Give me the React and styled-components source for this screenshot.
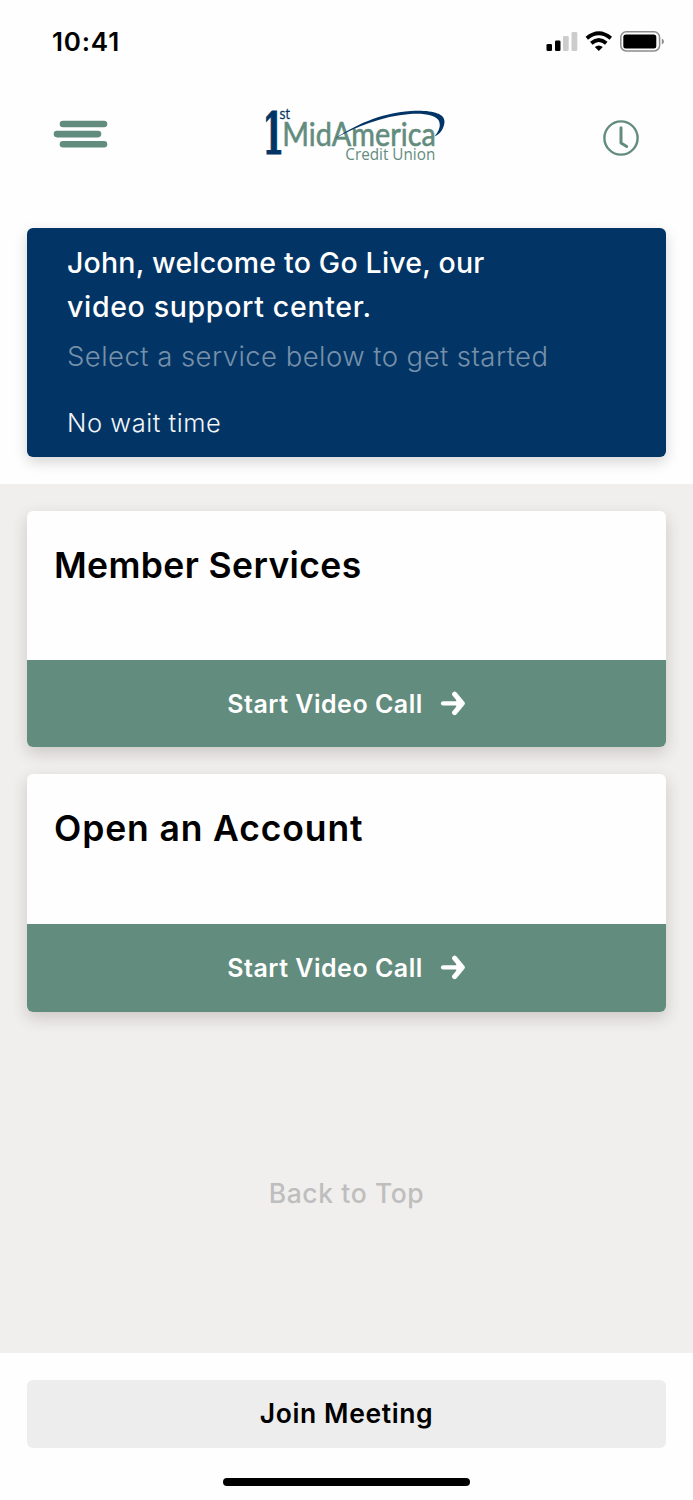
import React from "react";
import styled, { createGlobalStyle } from "styled-components";

const GlobalStyle = createGlobalStyle`
  * {
    box-sizing: border-box;
  }

  body {
    margin: 0;
    background-color: #fefefe;
    font-family: "Inter", sans-serif;
  }

  h1, h2, p {
    margin: 0;
    white-space: nowrap;
  }
`;

const Screen = styled.div`
  display: flex;
  flex-direction: column;
  width: 693px;
  height: 1500px;
  overflow: hidden;
  background-color: #fefefe;
`;

const StatusBar = styled.div`
  display: flex;
  justify-content: space-between;
  align-items: center;
  height: 84px;
  padding: 0 28px 0 52px;
`;

const StatusTime = styled.p`
  color: #000000;
  font-size: 26px;
  font-weight: 600;
  line-height: 32px;
  letter-spacing: 0.8px;
`;

const StatusIcons = styled.svg`
  display: block;
  width: 120px;
  height: 30px;
`;

const Header = styled.header`
  display: flex;
  justify-content: space-between;
  align-items: flex-start;
  height: 144px;
  padding: 11px 53px 0;
`;

const IconButton = styled.button`
  display: flex;
  width: ${(props) => props.$width}px;
  height: 80px;
  padding: ${(props) => props.$top}px 0 0;
  border: none;
  background: none;
  cursor: pointer;

  svg {
    display: block;
    flex: none;
  }
`;

const LogoImage = styled.svg`
  display: block;
  width: 200px;
  height: 75px;
  margin-right: 1px;
  overflow: visible;
`;

const Banner = styled.section`
  height: 229px;
  margin: 0 27px 27px;
  padding: 13px 40px 0;
  border-radius: 6px;
  background-color: #023565;
  box-shadow: 0 5px 14px rgba(0, 0, 0, 0.17);
`;

const BannerTitle = styled.h1`
  color: #ffffff;
  font-size: ${(props) => props.$size}px;
  font-weight: 500;
  line-height: 44px;
  letter-spacing: ${(props) => props.$spacing}px;
`;

const BannerHint = styled.p`
  margin-top: 5px;
  color: #7690aa;
  font-size: 27.5px;
  font-weight: 300;
  line-height: 44px;
  letter-spacing: 0.45px;
`;

const WaitTime = styled.p`
  margin-top: 25px;
  color: #f2f5f8;
  font-size: 25.5px;
  font-weight: 300;
  line-height: 40px;
  letter-spacing: 0.55px;
`;

const Services = styled.main`
  display: flex;
  flex-direction: column;
  gap: 27px;
  height: 869px;
  padding: 27px 27px 0;
  background-color: #f0efed;
`;

const Card = styled.section`
  display: flex;
  flex-direction: column;
  height: ${(props) => props.$height}px;
  flex: none;
  border-radius: 6px;
  background-color: #fefefe;
  box-shadow: 0 6px 16px rgba(60, 45, 45, 0.2);
  overflow: hidden;
`;

const CardTitle = styled.h2`
  flex: 1;
  padding: 32px 27px 0;
  color: #000000;
  font-size: 35.5px;
  font-weight: 600;
  line-height: 45px;
  letter-spacing: ${(props) => props.$spacing}px;
`;

const CallButton = styled.button`
  display: flex;
  align-items: center;
  justify-content: center;
  gap: 17px;
  height: ${(props) => props.$height}px;
  padding: 0;
  border: none;
  background-color: #628c7d;
  color: #ffffff;
  font-family: "Inter", sans-serif;
  font-size: 25px;
  font-weight: 600;
  letter-spacing: 0.5px;
  cursor: pointer;
`;

const BackToTop = styled.p`
  margin-top: 134px;
  color: #bfbebe;
  font-size: 26.5px;
  font-weight: 500;
  line-height: 40px;
  letter-spacing: 0.6px;
  text-align: center;
`;

const Footer = styled.footer`
  display: flex;
  flex-direction: column;
  align-items: center;
  padding: 27px 27px 0;
`;

const JoinButton = styled.button`
  width: 639px;
  height: 68px;
  padding: 0 0 2px;
  border: none;
  border-radius: 6px;
  background-color: #ededed;
  color: #000000;
  font-family: "Inter", sans-serif;
  font-size: 26.5px;
  font-weight: 600;
  letter-spacing: 0.6px;
  cursor: pointer;
`;

const HomeIndicator = styled.div`
  width: 247px;
  height: 8px;
  margin-top: 30px;
  border-radius: 4px;
  background-color: #000000;
`;

const services = [
  { name: "Member Services", height: 236, buttonHeight: 87, spacing: 0.38 },
  { name: "Open an Account", height: 238, buttonHeight: 88, spacing: 0.87 },
];

const PhoneStatus = () => (
  <StatusIcons viewBox="545 27 120 30">
    <rect x="546.5" y="44" width="5.5" height="7" rx="1.3" />
    <rect x="555" y="40.5" width="5.5" height="10.5" rx="1.3" />
    <rect x="563" y="36" width="5.7" height="15" rx="1.3" fill="#cccccc" />
    <rect x="571.5" y="32" width="5.8" height="19" rx="1.3" fill="#cccccc" />
    <g fill="none" stroke="#000000" strokeWidth="3.8">
      <path d="M586.8 38.2Q598.8 28.2 610.8 38.2" />
      <path d="M591.3 43.2Q598.8 36.9 606.3 43.2" />
    </g>
    <path d="M594.8 47.1Q598.8 44 602.8 47.1L598.8 51Z" />
    <rect x="620.8" y="31.8" width="38.8" height="19.2" rx="5.5" fill="none" stroke="#8c8c8c" strokeWidth="1.5" />
    <rect x="623.3" y="34.5" width="33" height="14" rx="2.5" />
    <path d="M661.8 38.4Q664 39.3 664 41.4Q664 43.5 661.8 44.5Z" fill="#8c8c8c" />
  </StatusIcons>
);

const MenuIcon = () => (
  <svg width="56" height="30" viewBox="53 119 56 30">
    <g stroke="#628c7d" strokeWidth="6.6" strokeLinecap="round">
      <path d="M63 124H104" />
      <path d="M57 134.1H98" />
      <path d="M63 144.2H104" />
    </g>
  </svg>
);

const ClockIcon = () => (
  <svg width="38" height="38" viewBox="602 119.3 38 38">
    <g fill="none" stroke="#628c7d" strokeLinecap="round" strokeLinejoin="round">
      <circle cx="621" cy="138.3" r="16.6" strokeWidth="2.4" />
      <path d="M621 128V143.3L626.7 146.8" strokeWidth="3" />
    </g>
  </svg>
);

const Logo = () => (
  <LogoImage viewBox="255 95 200 75">
    <g fill="#023565">
      <text x="262.6" y="154" fontFamily="DejaVu Serif" fontWeight="700" fontSize="57" textLength="21.5" lengthAdjust="spacingAndGlyphs" stroke="#023565" strokeWidth="1">1</text>
      <text x="279.5" y="118.5" fontFamily="Open Sans" fontSize="14" textLength="10.5" lengthAdjust="spacingAndGlyphs" stroke="#023565" strokeWidth="0.3">st</text>
    </g>
    <g fill="#628c7d">
      <text x="282.3" y="145.5" fontFamily="Lato" fontSize="33.5" textLength="153.5" lengthAdjust="spacingAndGlyphs" stroke="#628c7d" strokeWidth="0.6">MidAmerica</text>
      <text x="345.3" y="160" fontFamily="Open Sans" fontSize="15.5" textLength="90" lengthAdjust="spacingAndGlyphs">Credit Union</text>
    </g>
    <path
      d="M334 139C354 126 379 113 411 111C431 110 445 113 444.5 122C444 129 440 134 434.5 136.5C439 131 441 126 439 121C436 115 424 113 410 114C382 116 356 127 334 139Z"
      fill="#023565"
    />
  </LogoImage>
);

const ArrowIcon = () => (
  <svg width="26" height="26" viewBox="0 0 26 26">
    <g fill="none" stroke="#ffffff" strokeLinecap="round" strokeLinejoin="round">
      <path d="M3 12.4H21" strokeWidth="4.2" />
      <path d="M14.6 3.2L22.3 12.4L14.6 21.6" strokeWidth="5" />
      <path d="M17 9.6L20 12.4L17 15.2Z" fill="#ffffff" strokeWidth="1.5" />
    </g>
  </svg>
);

const App = () => {
  return (
    <>
      <GlobalStyle />
      <Screen>
        <StatusBar>
          <StatusTime>10:41</StatusTime>
          <PhoneStatus />
        </StatusBar>
        <Header>
          <IconButton $width={56} $top={24} aria-label="Menu">
            <MenuIcon />
          </IconButton>
          <Logo />
          <IconButton $width={38} $top={24.3} aria-label="History">
            <ClockIcon />
          </IconButton>
        </Header>
        <Banner>
          <BannerTitle $size={28.5} $spacing={0.2}>John, welcome to Go Live, our</BannerTitle>
          <BannerTitle $size={28.5} $spacing={0.67}>video support center.</BannerTitle>
          <BannerHint>Select a service below to get started</BannerHint>
          <WaitTime>No wait time</WaitTime>
        </Banner>
        <Services>
          {services.map((service) => (
            <Card key={service.name} $height={service.height}>
              <CardTitle $spacing={service.spacing}>{service.name}</CardTitle>
              <CallButton $height={service.buttonHeight}>
                Start Video Call
                <ArrowIcon />
              </CallButton>
            </Card>
          ))}
          <BackToTop>Back to Top</BackToTop>
        </Services>
        <Footer>
          <JoinButton>Join Meeting</JoinButton>
          <HomeIndicator />
        </Footer>
      </Screen>
    </>
  );
};

export default App;
